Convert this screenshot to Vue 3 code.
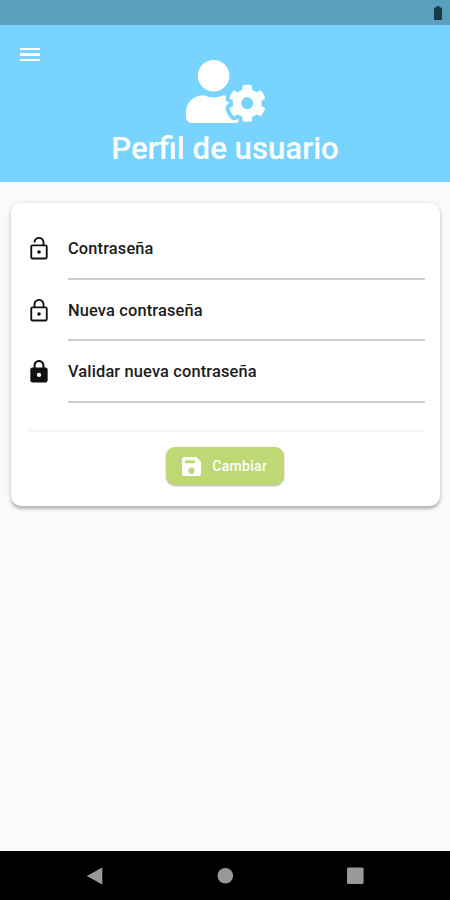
<script setup>
const lockBody = 'M18 8h-1V6c0-2.760-2.240-5-5-5S7 3.240 7 6v2H6c-1.100 0-2 .9-2 2v10c0 1.100.9 2 2 2h12c1.100 0 2-.9 2-2V10c0-1.100-.9-2-2-2z'
const fields = [
  {
    label: 'Contraseña',
    icon: 'M12 16.700a1.700 1.700 0 1 0 0-3.400 1.700 1.700 0 0 0 0 3.400zm6-8.700h-1V6c0-2.760-2.240-5-5-5S7 3.240 7 6h1.700c0-1.800 1.490-3.300 3.300-3.300s3.300 1.490 3.300 3.300v2H6c-1.100 0-2 .9-2 2v10c0 1.100.9 2 2 2h12c1.100 0 2-.9 2-2V10c0-1.100-.9-2-2-2zm.3 12.300H5.700V9.700h12.600v10.600z',
  },
  {
    label: 'Nueva contraseña',
    icon: lockBody + 'M8.700 6c0-1.800 1.490-3.300 3.300-3.300s3.300 1.490 3.300 3.300v2H8.700zM18.300 20.300H5.700V9.700h12.600zM12 16.700a1.700 1.700 0 1 0 0-3.400 1.700 1.700 0 0 0 0 3.400z',
  },
  {
    label: 'Validar nueva contraseña',
    icon: lockBody + 'M12 17a2 2 0 1 1 0-4 2 2 0 0 1 0 4zM15.100 8H8.900V6c0-1.710 1.390-3.100 3.100-3.100s3.100 1.390 3.100 3.100z',
  },
]
</script>

<template>
  <div class="screen">
    <div class="status">
      <svg class="battery" viewBox="0 0 8 14"><path d="M2.500 0h3v1.500H7q1 0 1 1V13q0 1-1 1H1q-1 0-1-1V2.500q0-1 1-1h1.500z" /></svg>
    </div>
    <header class="header">
      <button class="menu" aria-label="Menú"><span></span><span></span><span></span></button>
      <div class="hero">
        <svg class="user" viewBox="0 0 640 512" preserveAspectRatio="none">
          <path d="M610.500 373.300c2.600-14.100 2.600-28.500 0-42.600l25.800-14.900c3-1.700 4.300-5.200 3.300-8.500-6.700-21.600-18.200-41.200-33.200-57.400-2.300-2.500-6-3.100-9-1.400l-25.800 14.900c-10.900-9.300-23.400-16.500-36.900-21.300v-29.800c0-3.400-2.400-6.400-5.700-7.100-22.300-5-45-4.800-66.200 0-3.300.7-5.700 3.700-5.700 7.100v29.800c-13.500 4.800-26 12-36.900 21.300l-25.800-14.900c-2.900-1.700-6.700-1.100-9 1.400-15 16.200-26.500 35.800-33.200 57.400-1 3.300.4 6.800 3.300 8.500l25.800 14.900c-2.600 14.100-2.600 28.500 0 42.600l-25.800 14.900c-3 1.700-4.300 5.200-3.300 8.500 6.700 21.600 18.200 41.100 33.200 57.400 2.300 2.500 6 3.100 9 1.400l25.800-14.900c10.900 9.300 23.400 16.500 36.900 21.300v29.800c0 3.400 2.400 6.400 5.700 7.100 22.300 5 45 4.800 66.200 0 3.300-.7 5.700-3.700 5.700-7.100v-29.800c13.500-4.800 26-12 36.900-21.300l25.800 14.900c2.900 1.700 6.700 1.100 9-1.400 15-16.200 26.500-35.800 33.200-57.400 1-3.300-.4-6.800-3.300-8.500l-25.800-14.900zM496 400.500c-26.800 0-48.500-21.800-48.500-48.500s21.800-48.500 48.500-48.500 48.500 21.800 48.500 48.500-21.700 48.500-48.500 48.500zM224 256c70.700 0 128-57.300 128-128S294.700 0 224 0 96 57.300 96 128s57.300 128 128 128zm201.200 226.500c-2.300-1.200-4.600-2.600-6.800-3.900l-7.900 4.600c-6 3.400-12.800 5.300-19.600 5.300-10.900 0-21.400-4.600-28.900-12.600-18.300-19.800-32.300-43.900-40.200-69.600-5.500-17.700 1.900-36.400 17.900-45.700l7.900-4.600c-.1-2.600-.1-5.200 0-7.800l-7.900-4.600c-16-9.200-23.400-28-17.900-45.700.9-2.900 2.200-5.800 3.200-8.700-3.800-.3-7.500-1.200-11.400-1.200h-16.700c-22.200 10.200-46.900 16-72.900 16s-50.600-5.800-72.900-16h-16.700C60.200 288 0 348.200 0 422.400V464c0 26.500 21.500 48 48 48h352c10.100 0 19.500-3.200 27.200-8.500-1.200-3.800-2-7.700-2-11.800v-9.200z" />
        </svg>
        <h1>Perfil de usuario</h1>
      </div>
    </header>
    <main>
      <section class="card">
        <div v-for="field in fields" :key="field.label" class="row">
          <svg class="lock" viewBox="0 0 24 24" preserveAspectRatio="none"><path fill-rule="evenodd" :d="field.icon" /></svg>
          <div class="field"><span>{{ field.label }}</span></div>
        </div>
        <div class="divider"></div>
        <button class="save">
          <svg viewBox="3 3 18 18"><path d="M16.600 3H5.200C4 3 3 3.900 3 5.200v13.600C3 20.100 4 21 5.200 21h13.600c1.200 0 2.200-.9 2.200-2.200V7.400zM12 19c-1.660 0-3-1.340-3-3s1.340-3 3-3 3 1.340 3 3-1.340 3-3 3zm2-10H7a1.500 1.500 0 0 1 0-3h7a1.500 1.500 0 0 1 0 3z" /></svg>
          <span>Cambiar</span>
        </button>
      </section>
    </main>
    <nav class="nav">
      <svg viewBox="0 0 18 18"><path d="M16.300 .5v17L.7 9z" /></svg>
      <svg viewBox="0 0 18 18"><circle cx="9.300" cy="8.700" r="7.800" /></svg>
      <svg viewBox="0 0 18 18"><rect x="1" y=".4" width="16.600" height="16.600" rx="1.500" /></svg>
    </nav>
  </div>
</template>

<style>
body { margin: 0; }
</style>

<style scoped>
.screen {
  width: 450px;
  height: 900px;
  display: flex;
  flex-direction: column;
  overflow: hidden;
  background: #fafafa;
  font-family: Roboto, sans-serif;
}
button { border: 0; font-family: inherit; }
.status {
  height: 25px;
  flex: none;
  box-sizing: border-box;
  padding: 6px 8px 0 0;
  display: flex;
  justify-content: flex-end;
  background: #5a9fbc;
}
.battery { width: 8px; height: 14px; fill: #183b49; }
.header {
  height: 156.500px;
  flex: none;
  display: grid;
  grid-template-columns: 40px 1fr 40px;
  align-items: start;
  background: #78d4ff;
}
.menu {
  width: 40px;
  padding: 23px 0 0 20px;
  display: flex;
  flex-direction: column;
  gap: 3px;
  background: none;
}
.menu span { width: 19.500px; height: 2.400px; background: #fff; }
.hero { display: flex; flex-direction: column; align-items: center; padding-top: 35px; }
.user { display: block; width: 79px; height: 63px; fill: #fff; }
h1 {
  margin: 7px 0 0;
  font-size: 31.200px;
  line-height: 38px;
  font-weight: 500;
  color: #fff;
  white-space: nowrap;
}
main { flex: 1; padding: 21px 10px 0 11px; }
.card {
  height: 303px;
  box-sizing: border-box;
  padding: 15.500px 15.500px 0 15px;
  display: flex;
  flex-direction: column;
  background: #fff;
  border-radius: 10px;
  box-shadow: 0 3px 3px rgba(0, 0, 0, .22), 0 1px 6px rgba(0, 0, 0, .12);
}
.row { height: 61.500px; flex: none; display: flex; }
.lock { width: 26px; height: 25.500px; flex: none; margin: 18px 16px 0 0; fill: #111; }
.field {
  flex: 1;
  box-sizing: border-box;
  border-bottom: 2px solid #cdcdcd;
  padding-top: 20px;
  font-size: 16.400px;
  letter-spacing: .15px;
  line-height: 22px;
  font-weight: 500;
  color: #1c1c1c;
}
.divider { height: 2px; flex: none; margin: 27.500px 0 0 3px; background: #f5f5f5; }
.save {
  width: 118px;
  height: 38px;
  flex: none;
  margin: 15px auto 0;
  padding: 0 0 0 16px;
  display: flex;
  align-items: center;
  gap: 11px;
  border-radius: 9px;
  background: #bdd874;
  box-shadow: 0 1px 2px rgba(0, 0, 0, .3);
  color: #fff;
  font-size: 14px;
  letter-spacing: .3px;
  font-weight: 500;
}
.save svg { width: 19px; height: 19px; flex: none; fill: #fff; }
.nav {
  height: 49px;
  flex: none;
  box-sizing: border-box;
  padding: 0 86px;
  display: flex;
  justify-content: space-between;
  align-items: center;
  background: #000;
}
.nav svg { width: 18px; height: 18px; fill: #999; }
</style>
